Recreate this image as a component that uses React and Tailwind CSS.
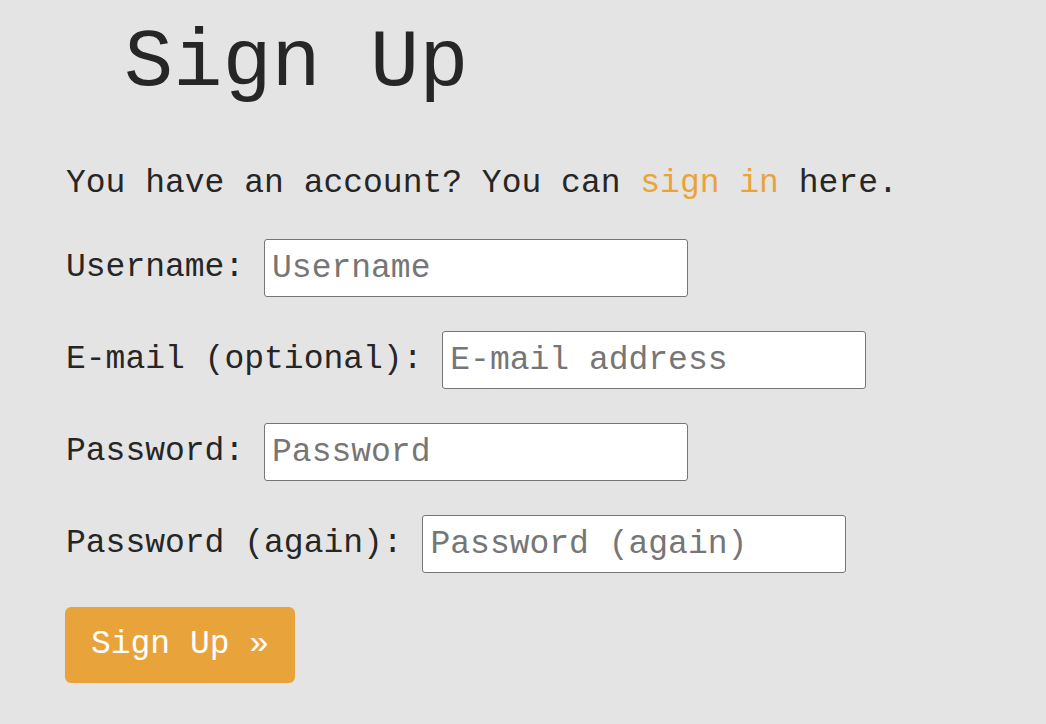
import React from 'react';

const mono = { fontFamily: '"Liberation Mono", "DejaVu Sans Mono", monospace' };

const Field = ({ label, placeholder, type = 'text' }) => (
  <div className="flex items-center h-[58px]">
    <label className="whitespace-pre">{label} </label>
    <input
      type={type}
      placeholder={placeholder}
      className="w-[424px] h-[58px] bg-white border border-[#767676] rounded-[3px] px-[7px] text-[33px] text-[#222] placeholder:text-[#767676] outline-none"
      style={mono}
    />
  </div>
);

export default function App() {
  return (
    <div
      className="min-h-[724px] w-full bg-[#e4e4e4] text-[#262626] pl-[66px] text-[33px] leading-[40px]"
      style={mono}
    >
      {/* Title */}
      <h1 className="pt-[14px] pl-[58px] text-[82px] leading-[100px] font-normal">Sign Up</h1>

      <p className="mt-[50px] whitespace-pre">
        You have an account? You can <a href="#" className="text-[#e8a43b]">sign in</a> here.
      </p>

      <form className="mt-[35px] flex flex-col gap-[34px]" onSubmit={(e) => e.preventDefault()}>
        <Field label="Username:" placeholder="Username" />
        <Field label="E-mail (optional):" placeholder="E-mail address" type="email" />
        <Field label="Password:" placeholder="Password" type="password" />
        <Field label="Password (again):" placeholder="Password (again)" type="password" />

        <div>
          <button
            type="submit"
            className="-ml-[1px] w-[230px] h-[76px] bg-[#e8a43b] text-white rounded-[6px] text-[33px] whitespace-pre"
            style={mono}
          >
            Sign Up »
          </button>
        </div>
      </form>
    </div>
  );
}
